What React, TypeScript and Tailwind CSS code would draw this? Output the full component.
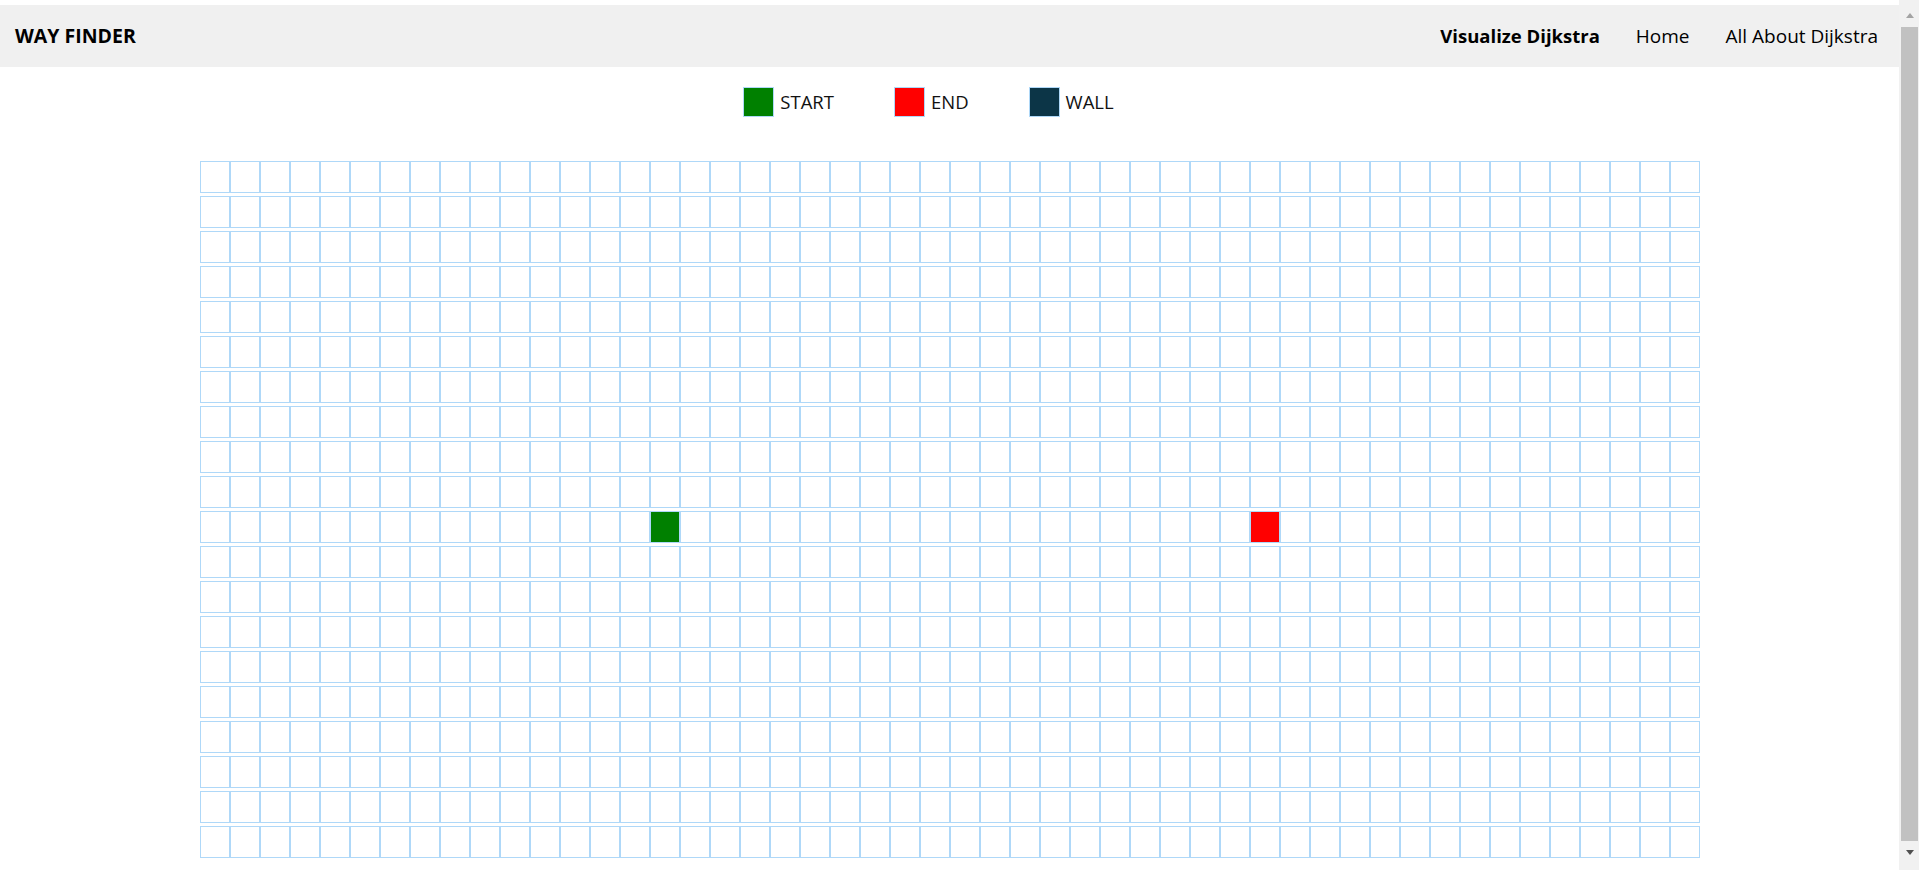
const ROWS = 20;
const COLS = 50;
const START = { row: 10, col: 15 };
const END = { row: 10, col: 35 };

const cellColor = (r: number, c: number) => {
    if (r === START.row && c === START.col) return "bg-[#008000]";
    if (r === END.row && c === END.col) return "bg-[#ff0000]";
    return "bg-white";
};

const Legend = () => {
    const items = [
        { label: "START", color: "bg-[#008000]" },
        { label: "END", color: "bg-[#ff0000]" },
        { label: "WALL", color: "bg-[#0c3547]" },
    ];
    return (
        <div className="flex justify-center gap-[60px] pr-[42px] mt-[20px]">
            {items.map((item) => (
                <div key={item.label} className="flex items-center gap-[6px]">
                    <div className={`w-[31px] h-[30px] border border-[#afd8f8] ${item.color}`} />
                    <span className="text-[18.5px] text-[#111]">{item.label}</span>
                </div>
            ))}
        </div>
    );
};

const Grid = () => {
    return (
        <div className="flex flex-col items-center gap-[3px] mt-[44px]">
            {Array.from({ length: ROWS }).map((_, r) => (
                <div key={r} className="flex">
                    {Array.from({ length: COLS }).map((_, c) => (
                        <div
                            key={c}
                            className={`w-[30px] h-[32px] border border-[#afd8f8] ${cellColor(r, c)}`}
                        />
                    ))}
                </div>
            ))}
        </div>
    );
};

const Scrollbar = () => (
    <div className="w-[20px] shrink-0 bg-[#f1f1f1] flex flex-col pl-[2px] pr-[1px]">
        <div className="h-[27px] flex items-start justify-center pt-[13px]">
            <div className="w-0 h-0 border-l-[4px] border-r-[4px] border-b-[5px] border-l-transparent border-r-transparent border-b-[#a3a3a3]" />
        </div>
        <div className="h-[814px] bg-[#c1c1c1]" />
        <div className="flex-1 flex items-start justify-center pt-[9px]">
            <div className="w-0 h-0 border-l-[4px] border-r-[4px] border-t-[5px] border-l-transparent border-r-transparent border-t-[#505050]" />
        </div>
    </div>
);

export default function App() {
    return (
        <div className="flex h-[870px] overflow-hidden bg-white" style={{ fontFamily: '"Open Sans", sans-serif' }}>
            <div className="flex-1 pt-[5px]">
                <nav className="h-[62px] bg-[#f0f0f0] flex items-center justify-between pl-[15px] pr-[21px]">
                    <span className="text-[19.5px] font-bold text-black">WAY FINDER</span>
                    <div className="flex items-center gap-[36px] text-[19px] text-black">
                        <span className="font-bold text-[18.5px]">Visualize Dijkstra</span>
                        <span>Home</span>
                        <span>All About Dijkstra</span>
                    </div>
                </nav>
                <Legend />
                <Grid />
            </div>
            <Scrollbar />
        </div>
    );
}
